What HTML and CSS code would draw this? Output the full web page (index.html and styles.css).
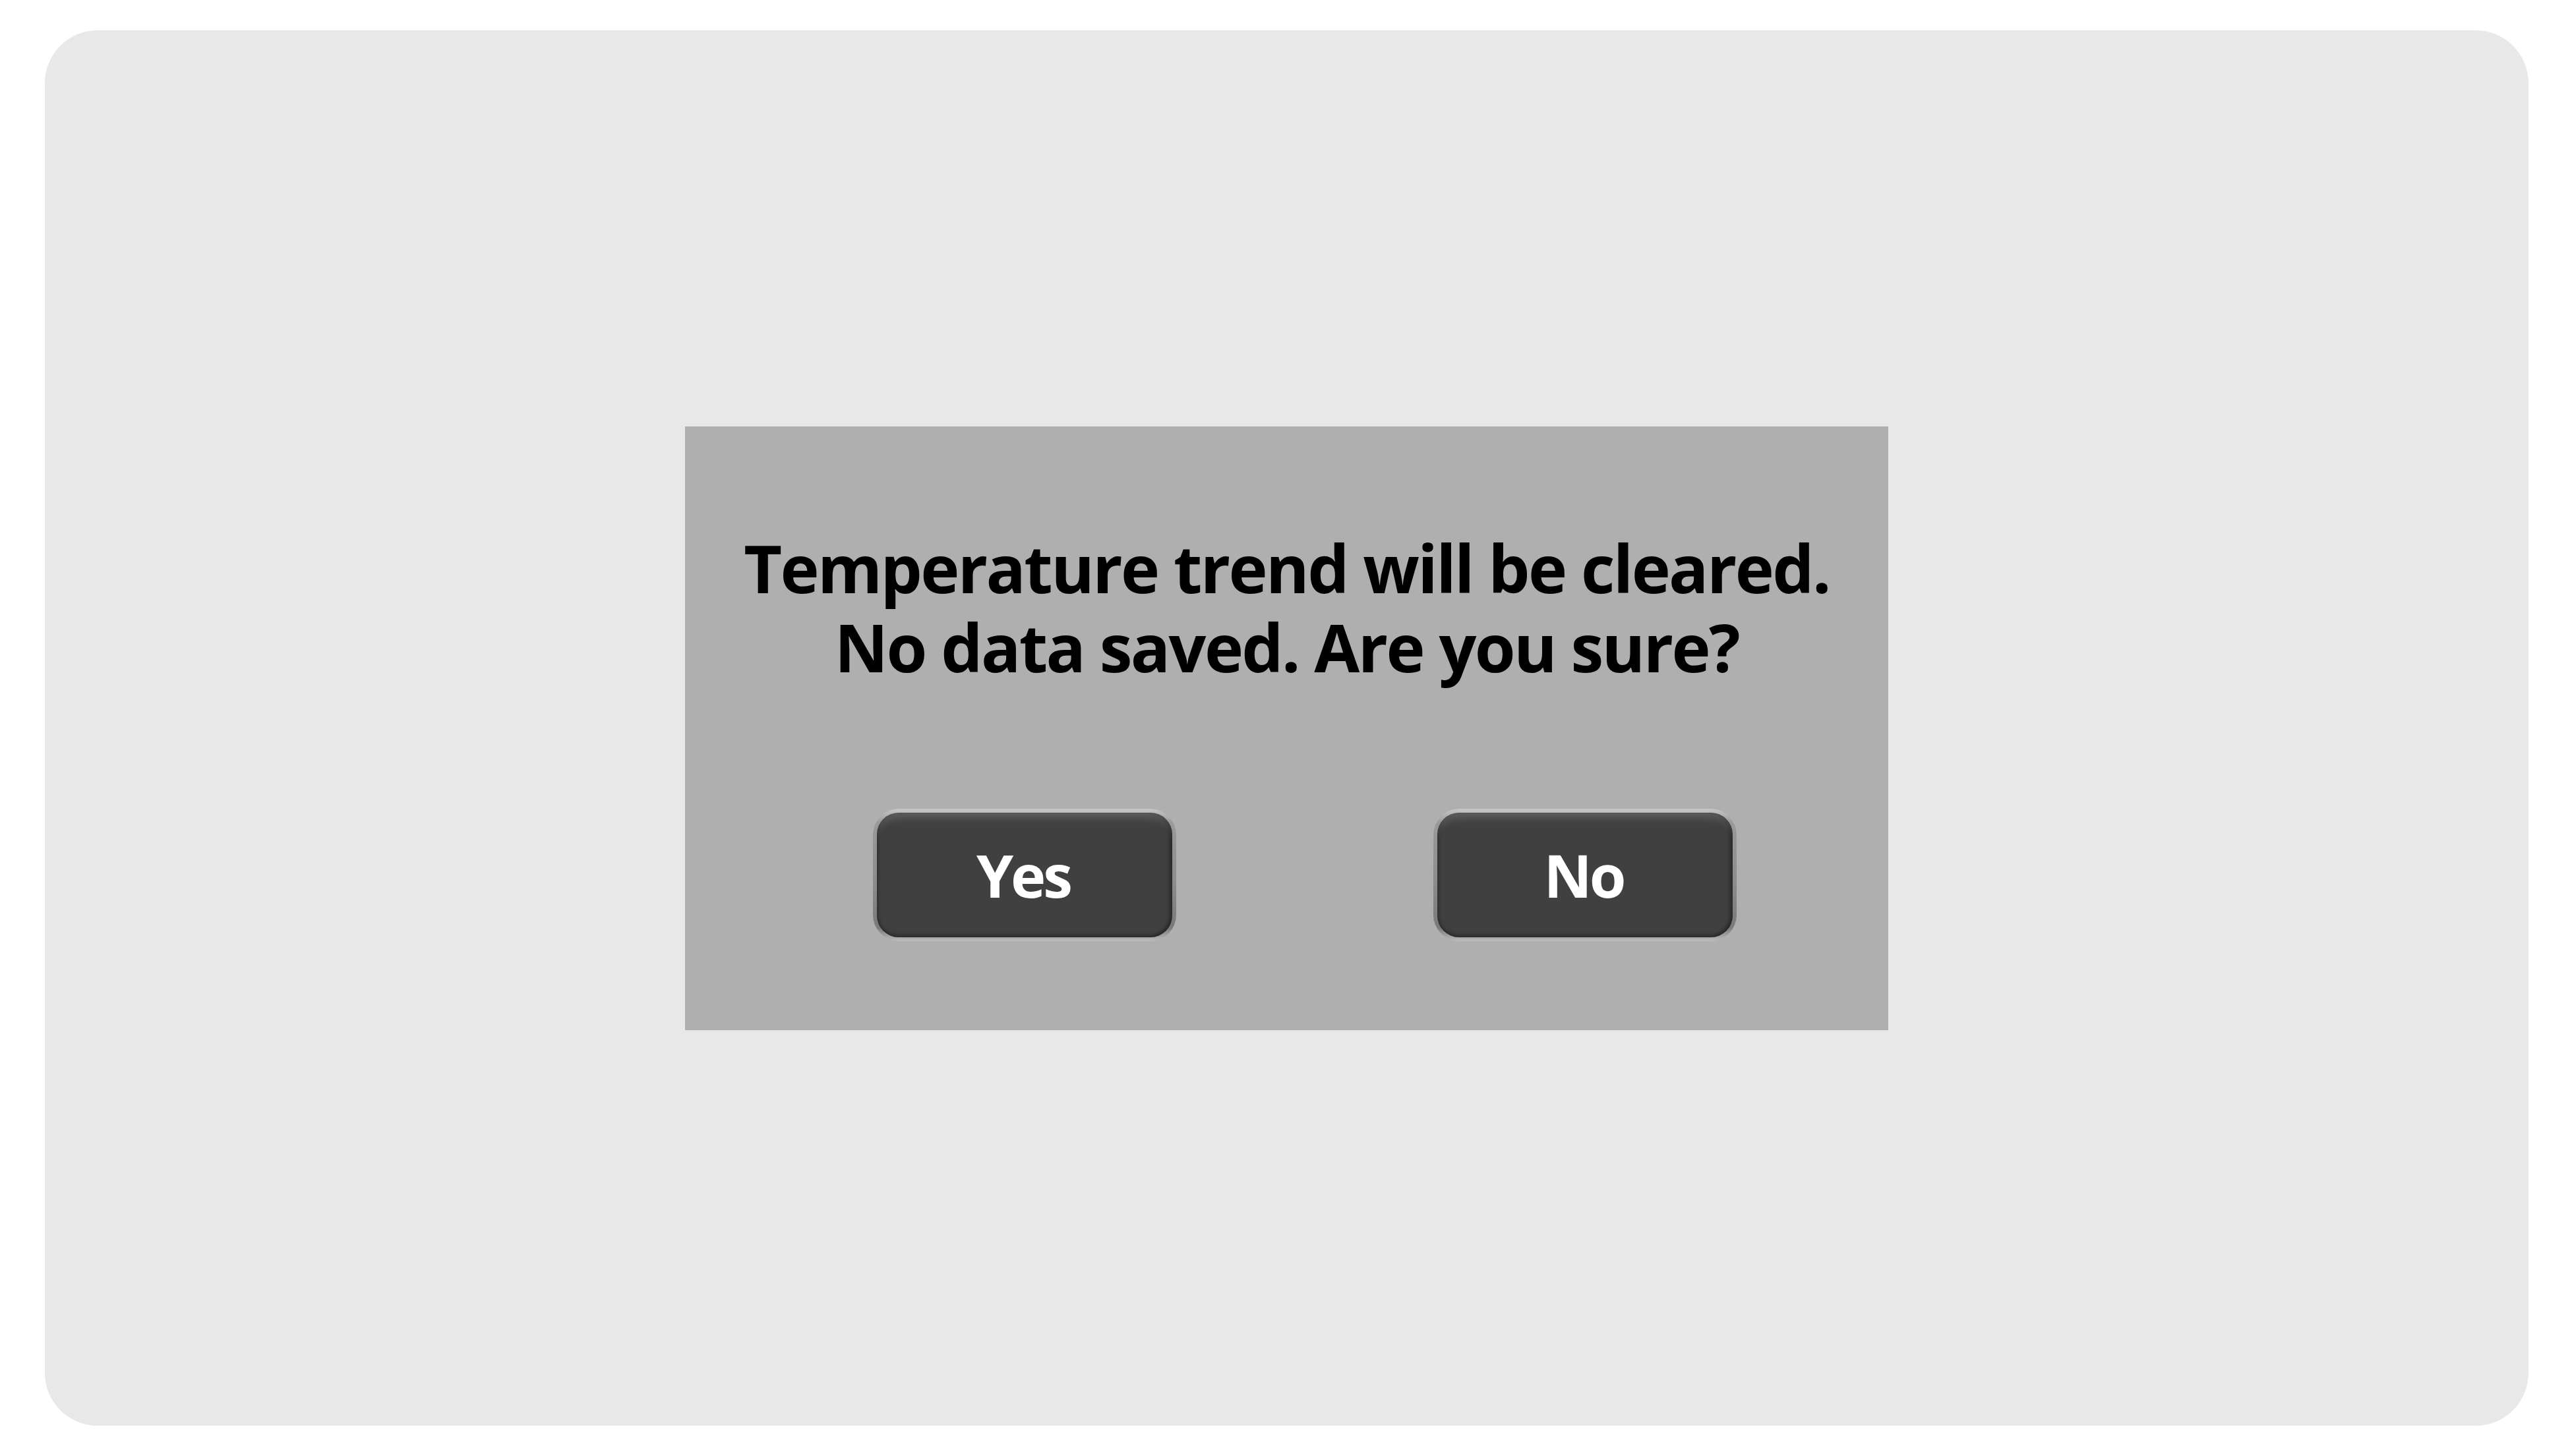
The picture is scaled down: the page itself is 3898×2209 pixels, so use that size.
FILE: index.html
```html
<!DOCTYPE html>
<html lang="en">
<head>
<meta charset="utf-8">
<title>Clear trend</title>
<link rel="stylesheet" href="styles.css">
</head>
<body>
<main class="screen">
  <section class="dialog">
    <p class="message"><span class="line">Temperature trend will be cleared.</span><span class="line">No data saved. Are you sure?</span></p>
    <div class="actions">
      <button class="btn" type="button"><span class="btn-face">Yes</span></button>
      <button class="btn" type="button"><span class="btn-face">No</span></button>
    </div>
  </section>
</main>
</body>
</html>
```

FILE: styles.css
```css
html, body {
  margin: 0;
  padding: 0;
  background: #ffffff;
}
body {
  width: 3898px;
  height: 2209px;
  overflow: hidden;
}
.screen {
  box-sizing: border-box;
  margin: 46px 63px 0 68px;
  height: 2117px;
  border-radius: 80px;
  background: #e8e8e8;
  display: flex;
  align-items: center;
  justify-content: center;
}
.dialog {
  box-sizing: border-box;
  width: 1825px;
  height: 916px;
  background: #afafaf;
  padding-top: 154px;
  display: flex;
  flex-direction: column;
}
.message {
  margin: 0;
  text-align: center;
  font-family: "Open Sans", "Noto Sans", sans-serif;
  font-weight: 700;
  font-size: 100px;
  line-height: 120px;
  letter-spacing: -2.6px;
  color: #000000;
}
.line {
  display: block;
  height: 120px;
}
.actions {
  display: flex;
  gap: 390px;
  padding-left: 285px;
  margin-top: 186px;
}
.btn {
  box-sizing: border-box;
  width: 460px;
  height: 201px;
  padding: 6px;
  border: none;
  border-radius: 40px;
  background: linear-gradient(180deg, #c8c8c8 0%, #9a9a9a 10%, #8e8e8e 50%, #7a7a7a 90%, #bcbcbc 100%);
  cursor: pointer;
}
.btn-face {
  display: flex;
  align-items: center;
  justify-content: center;
  width: 100%;
  height: 100%;
  box-sizing: border-box;
  border-radius: 33px;
  background: #404040;
  box-shadow:
    inset 0 16px 12px -8px rgba(255, 255, 255, 0.16),
    inset -6px 0 6px -2px rgba(0, 0, 0, 0.35),
    inset 0 -6px 6px -3px rgba(0, 0, 0, 0.3),
    inset 5px 0 5px -3px rgba(0, 0, 0, 0.25);
  font-family: "Open Sans", "Noto Sans", sans-serif;
  font-weight: 700;
  font-size: 90px;
  letter-spacing: -4px;
  text-indent: -4px;
  line-height: 1;
  color: #ffffff;
}
```
